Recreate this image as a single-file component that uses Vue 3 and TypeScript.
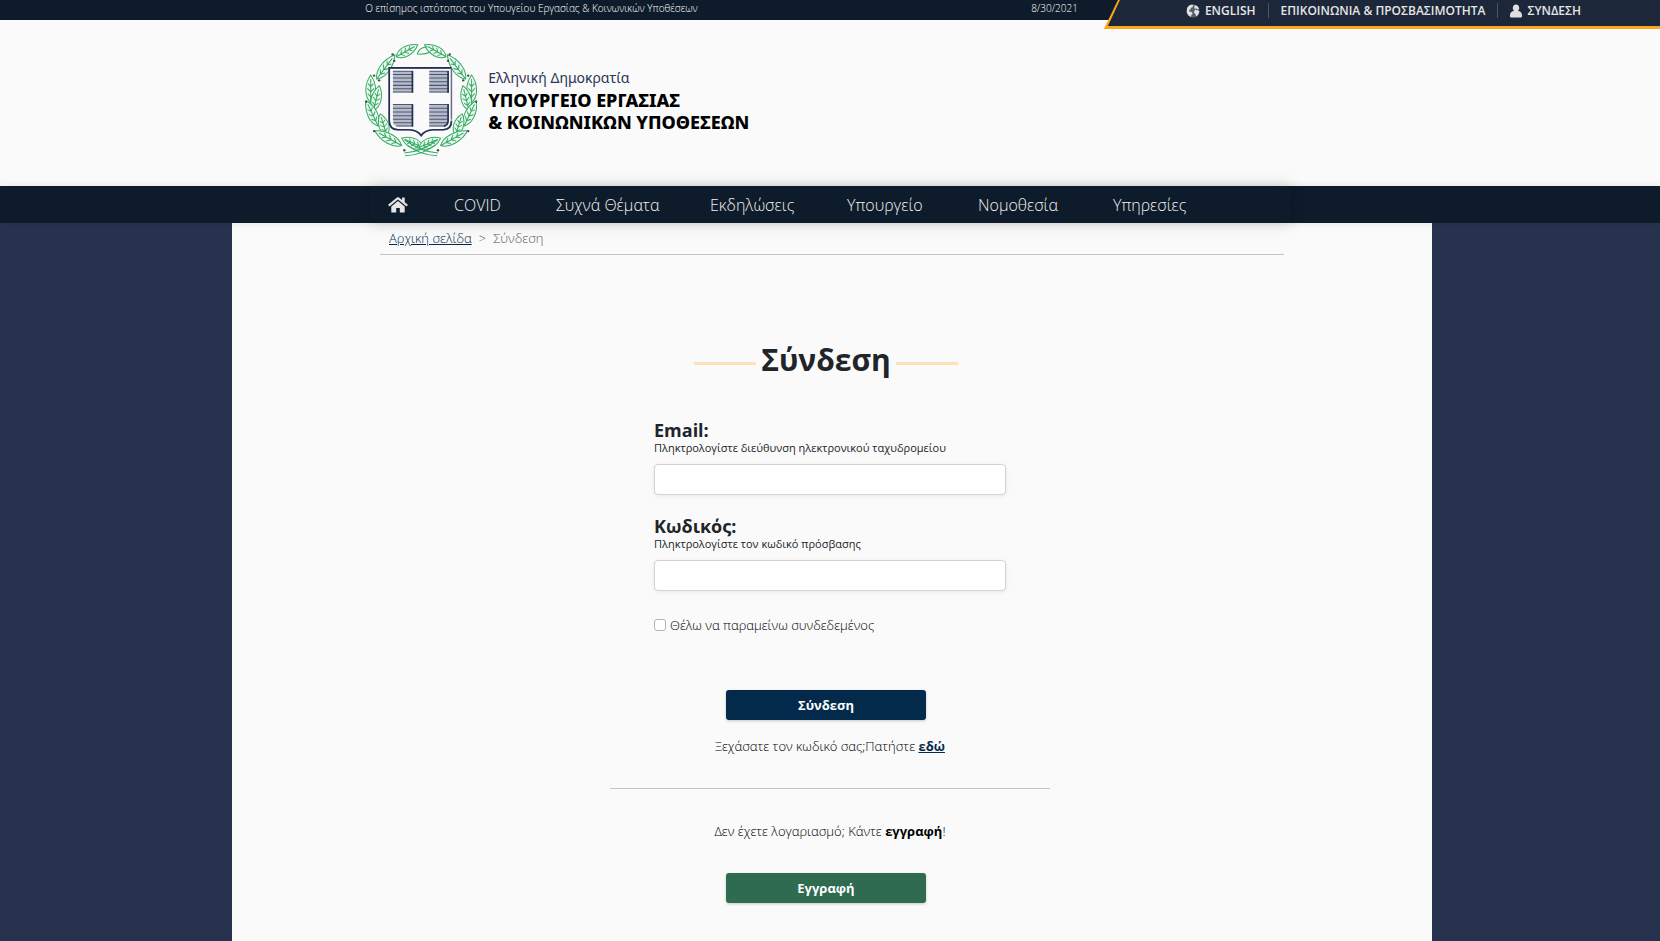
<script setup lang="ts">
import { ref } from 'vue'

interface Leaf {
  x: number
  y: number
  angle: number
  length: number
}

function leaf(x: number, y: number, tipX: number, tipY: number): Leaf {
  return {
    x,
    y,
    angle: (Math.atan2(tipY - y, tipX - x) * 180) / Math.PI,
    length: Math.hypot(tipX - x, tipY - y) / 80,
  }
}

const branch: Leaf[] = [
  leaf(126, 66, 190, 30),
  leaf(68, 132, 122, 60),
  leaf(50, 202, 50, 120),
  leaf(58, 226, 76, 152),
  leaf(72, 272, 36, 196),
  leaf(98, 300, 78, 236),
  leaf(142, 330, 62, 286),
  leaf(206, 336, 142, 308),
]
const berries: number[][] = [[115, 59], [120, 78], [60, 122], [75, 136], [36, 200], [60, 287], [150, 344]]

const menu: string[] = ['COVID', 'Συχνά Θέματα', 'Εκδηλώσεις', 'Υπουργείο', 'Νομοθεσία', 'Υπηρεσίες']

const email = ref('')
const password = ref('')
const remember = ref(false)
</script>

<template>
  <div class="page">
    <div class="topbar">
      <div class="official">
        <span>Ο επίσημος ιστότοπος του Υπουγείου Εργασίας &amp; Κοινωνικών Υποθέσεων</span>
        <time datetime="2021-08-30">8/30/2021</time>
      </div>
      <div class="utility-edge">
        <nav class="utility" aria-label="Βοηθητικό μενού">
          <a href="#">
            <svg width="14" height="14" viewBox="0 0 14 14" aria-hidden="true">
              <circle cx="7" cy="7" r="6.6" fill="#56606c" />
              <path d="M1 4 3 1.5 6 .6 7.5 1.3 6.6 3 5 4 4.4 5.4 3 6 3.6 7.5 6 8.3 6.6 9.6 5.3 11 5 13 2.6 11.6.8 8.8ZM8.8 1.1 11.5 2.3 13.2 5 11.5 5.2 10.8 4.2 9.6 5 8.2 4ZM8.7 6 11 5.7 13.4 7.4 12.3 10.6 10.2 12.6 9.4 10 8 8.4Z" fill="#dedfe0" />
            </svg>
            ENGLISH
          </a>
          <a href="#">ΕΠΙΚΟΙΝΩΝΙΑ &amp; ΠΡΟΣΒΑΣΙΜΟΤΗΤΑ</a>
          <a href="#">
            <svg width="12" height="14" viewBox="0 0 12 14" aria-hidden="true">
              <path d="M6 .5a3.2 3.6 0 0 1 2 6.5c2.4.2 4 1.6 4 4.2V12c0 1-.6 1.5-1.5 1.5h-9C.6 13.5 0 13 0 12v-.8C0 8.6 1.6 7.2 4 7A3.2 3.6 0 0 1 6 .5Z" fill="#dedfe0" />
            </svg>
            ΣΥΝΔΕΣΗ
          </a>
        </nav>
      </div>
    </div>

    <header class="masthead">
      <a class="brand" href="#">
        <svg class="emblem" viewBox="33 25 333 339" aria-hidden="true">
          <defs>
            <g id="leaf">
              <path d="M0 0C16-19 52-20 80 0C52 20 16 19 0 0Z" fill="#eef8f1" />
              <path d="M0 0H68M16 0l10-9M16 0l10 9M31 0l10-10M31 0l10 10M46 0l9-8M46 0l9 8" fill="none" />
            </g>
            <g id="branch">
              <use
                v-for="(l, i) in branch"
                :key="i"
                href="#leaf"
                :transform="`translate(${l.x} ${l.y}) rotate(${l.angle}) scale(${l.length} 1)`"
              />
            </g>
            <g id="berries">
              <circle v-for="(b, i) in berries" :key="i" :cx="b[0]" :cy="b[1]" r="3.5" />
            </g>
          </defs>
          <g stroke="#35ab64" stroke-width="3">
            <use href="#branch" />
            <use href="#branch" transform="translate(400 0) scale(-1 1)" />
            <path d="M150 352q50-2 100-40M250 352q-50-2-100-40M152 360q50 0 90-32M248 360q-50 0-90-32M188 58q6-20 30-22M188 58q22 2 40-6" fill="none" />
          </g>
          <g fill="#3c4f55">
            <use href="#berries" />
            <use href="#berries" transform="translate(400 0) scale(-1 1)" />
          </g>
          <path d="M105 100H290V258Q290 282 266 283H236Q211 284 200 300Q189 284 164 283H131Q105 282 105 256Z" fill="#fafafa" stroke="#a0a6b6" stroke-width="5" />
          <path d="M290 99H105V256Q105 282 131 283H164Q189 284 200 300Q211 284 236 283H266Q290 282 290 258" fill="none" stroke="#243154" stroke-width="5" />
          <path d="M290 99V250" stroke="#606a84" stroke-width="3" />
          <g fill="#b7bbc7">
            <path d="M116 108h60v64h-60zM224 108h58v64h-58zM116 207h60v66h-45q-15 0-15-17zM224 207h58v50q0 16-14 16h-44z" />
          </g>
          <path d="M116 109h60M116 119h60M116 129h60M116 140h60M116 151h60M116 161h60M116 171h60M224 109h58M224 119h58M224 129h58M224 140h58M224 151h58M224 161h58M224 171h58M116 208h60M116 219h60M116 230h60M116 241h60M116 252h60M118 262h58M126 272h50M224 208h58M224 219h58M224 230h58M224 241h58M224 252h58M224 262h56M224 272h48" stroke="#4a5674" stroke-width="3" />
          <path d="M174 108v65M280 108v65M174 207v66M280 207v50q0 12-12 15" fill="none" stroke="#243154" stroke-width="5" />
        </svg>
        <span class="brand-text">
          <span class="state">Ελληνική Δημοκρατία</span>
          <strong>ΥΠΟΥΡΓΕΙΟ ΕΡΓΑΣΙΑΣ<br />&amp; ΚΟΙΝΩΝΙΚΩΝ ΥΠΟΘΕΣΕΩΝ</strong>
        </span>
      </a>
    </header>

    <div class="navband">
      <nav class="menu" aria-label="Κύριο μενού">
        <a href="#" aria-label="Αρχική">
          <svg width="20" height="16" viewBox="0 0 20 16" aria-hidden="true">
            <path d="M10 3.9 3.3 9.4V15c0 .4.2.6.6.6h4.3V11h3.6v4.6h4.3c.4 0 .6-.2.6-.6V9.4ZM19.6 7.6 16.7 5.2V.6h-2.6v2.4L11 .5C10.4 0 9.6 0 9 .5L.4 7.6c-.2.2-.3.5-.1.7l.7.8c.2.2.5.2.7.1L10 2.4l8.300 6.8c.2.1.5.1.7-.1l.7-.8c.2-.2.1-.5-.1-.7Z" fill="#e6e6e6" />
          </svg>
        </a>
        <a v-for="item in menu" :key="item" href="#">{{ item }}</a>
      </nav>
    </div>

    <div class="body">
      <main class="sheet">
        <nav class="crumbs" aria-label="Διαδρομή">
          <a href="#">Αρχική σελίδα</a><span>&gt;</span><span>Σύνδεση</span>
        </nav>

        <h1>Σύνδεση</h1>

        <form @submit.prevent>
          <div class="fields">
            <div class="field">
              <label for="email">Email:</label>
              <small id="email-hint">Πληκτρολογίστε διεύθυνση ηλεκτρονικού ταχυδρομείου</small>
              <input id="email" v-model="email" type="email" aria-describedby="email-hint" />
            </div>
            <div class="field">
              <label for="password">Κωδικός:</label>
              <small id="password-hint">Πληκτρολογίστε τον κωδικό πρόσβασης</small>
              <input id="password" v-model="password" type="password" aria-describedby="password-hint" />
            </div>
            <label class="remember">
              <input v-model="remember" type="checkbox" />
              Θέλω να παραμείνω συνδεδεμένος
            </label>
          </div>
          <button class="login" type="submit">Σύνδεση</button>
          <p class="note">Ξεχάσατε τον κωδικό σας;Πατήστε <a href="#">εδώ</a></p>
          <hr />
          <p class="note">Δεν έχετε λογαριασμό; Κάντε <b>εγγραφή</b>!</p>
          <button class="register" type="button">Εγγραφή</button>
        </form>
      </main>
    </div>
  </div>
</template>

<style>
body {
  margin: 0;
  background: #27334e;
}
</style>

<style scoped>
.page {
  display: flex;
  flex-direction: column;
  min-height: 100vh;
  overflow: hidden;
  color: #000;
  font-family: "Open Sans", "Noto Sans", sans-serif;
  font-size: 13px;
  font-weight: 320;
}

a {
  color: inherit;
}

.topbar {
  display: grid;
  grid-template-columns: 22% 1fr 33.5%;
  height: 20px;
  background: #0e1b2a;
}

.official {
  grid-column: 2;
  display: flex;
  justify-content: space-between;
  padding-right: 26px;
  color: #fff;
  font-size: 10px;
  font-weight: 360;
  line-height: 17px;
  white-space: nowrap;
}

.utility-edge {
  height: 29px;
  background: #fca41c;
  clip-path: polygon(14px 0, 100% 0, 100% 100%, 0 100%);
}

.utility {
  display: flex;
  box-sizing: border-box;
  height: 26px;
  padding: 3px 0 8px 70px;
  background: #1d273a;
  clip-path: polygon(16px 0, 100% 0, 100% 100%, 4px 100%);
}

.utility a {
  display: flex;
  align-items: center;
  gap: 5px;
  padding: 0 12px;
  border-left: 1px solid #4b5563;
  color: #e6e6e6;
  font-size: 12px;
  font-weight: 600;
  line-height: 14px;
  text-decoration: none;
  white-space: nowrap;
}

.utility a:first-child {
  border-left: 0;
}

.masthead {
  height: 166px;
  padding-left: 22%;
  background: #fafafa;
}

.brand {
  display: flex;
  gap: 11px;
  width: max-content;
  padding-top: 23px;
  text-decoration: none;
}

.emblem {
  width: 112px;
  height: 114px;
}

.brand-text {
  padding-top: 24px;
  color: #000;
  font-family: "Noto Sans", sans-serif;
  font-size: 18px;
  line-height: 22px;
}

.state {
  display: block;
  color: #2b3554;
  font-size: 14px;
  font-weight: 400;
}

.brand-text strong {
  font-weight: 800;
}

.navband {
  position: relative;
  padding: 0 370px;
  background: #0e1b2a;
  box-shadow: 0 0 8px rgb(0 0 0 / 10%);
}

.menu {
  display: grid;
  grid-template-columns: 66px 102px 154px 137px 131px 135px auto;
  padding-left: 18px;
  height: 37px;
  box-shadow: 0 0 16px rgb(0 0 0 / 16%);
  color: #f2f2f2;
  font-size: 16px;
  line-height: 38px;
}

.menu a {
  text-decoration: none;
  white-space: nowrap;
}

.menu svg {
  display: block;
  margin-top: 11px;
}

.body {
  display: flex;
  flex: 1;
  justify-content: center;
  padding-left: 4px;
}

.sheet {
  box-sizing: border-box;
  width: 1200px;
  padding: 0 148px;
  background: #fafafa;
}

.crumbs {
  display: flex;
  gap: 7px;
  padding: 0 9px;
  border-bottom: 1px solid #c4c4c4;
  color: #545d65;
  line-height: 31px;
}

.crumbs a {
  color: #032a4b;
}

h1 {
  display: flex;
  align-items: center;
  justify-content: center;
  gap: 5px;
  margin: 85px 0 40px;
  padding-right: 12px;
  color: #212529;
  font-size: 30px;
  font-weight: 700;
  line-height: 40px;
}

h1::before,
h1::after {
  width: 62px;
  height: 3px;
  margin-top: 7px;
  background: #fde2b8;
  content: "";
}

form {
  display: flex;
  flex-direction: column;
  align-items: center;
  padding-right: 4px;
}

.fields {
  width: 352px;
}

.field {
  display: flex;
  flex-direction: column;
  margin-bottom: 21px;
}

.field label {
  color: #212529;
  font-size: 18px;
  font-weight: 700;
  line-height: 20px;
}

.field small {
  color: #212529;
  font-size: 11px;
  font-weight: 400;
  line-height: 16px;
}

.field input {
  box-sizing: border-box;
  width: 100%;
  height: 31px;
  margin-top: 8px;
  padding: 4px 8px;
  border: 1px solid #ced4da;
  border-radius: 4px;
  background: #fff;
  box-shadow: 0 1px 4px rgb(0 0 0 / 8%);
}

.remember {
  display: flex;
  align-items: center;
  gap: 4px;
  margin-top: 24px;
  line-height: 20px;
}

.remember input {
  width: 12px;
  height: 12px;
  margin: 0;
  border: 1px solid #adb5bd;
  border-radius: 3px;
  background: #fff;
  appearance: none;
}

.remember input:checked {
  background: #032a4b;
}

button {
  width: 200px;
  height: 30px;
  margin-right: 8px;
  padding: 0;
  border: 0;
  border-radius: 3px;
  color: #fff;
  font: 700 13px "Open Sans", "Noto Sans", sans-serif;
  box-shadow: 0 1px 3px rgb(0 0 0 / 20%);
}

.login {
  margin-top: 55px;
  background: #032a4b;
}

.register {
  background: #2e6b51;
}

.note {
  margin: 16px 0 32px;
  line-height: 20px;
}

.note a {
  color: #032a4b;
  font-weight: 700;
}

.note b {
  font-weight: 700;
}

hr {
  width: 440px;
  margin: 0 0 16px;
  border: 0;
  border-top: 1px solid #c4c4c4;
}
</style>
